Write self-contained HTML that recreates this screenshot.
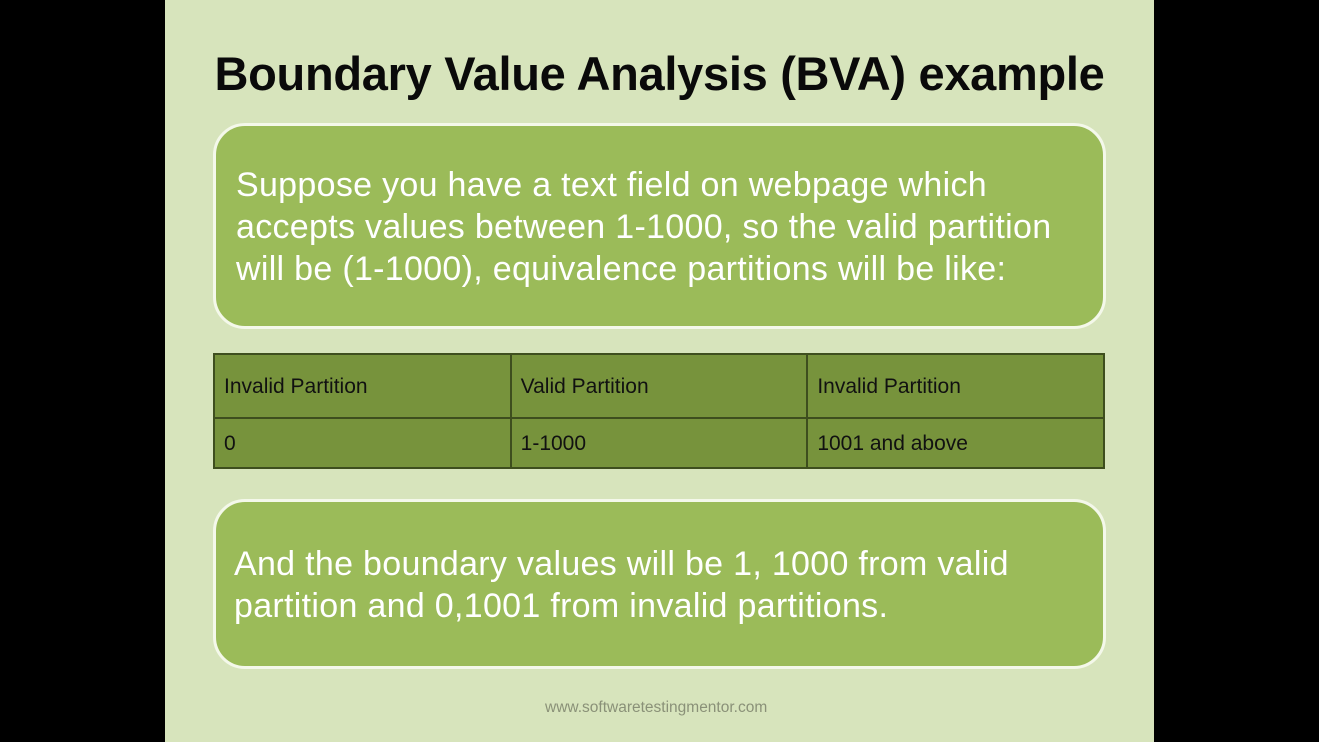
<!DOCTYPE html>
<html><head><style>
*{margin:0;padding:0;box-sizing:border-box}
body{width:1319px;height:742px;background:#000;position:relative;overflow:hidden;font-family:"Liberation Sans",sans-serif}
.slide{position:absolute;left:165px;top:0;width:989px;height:742px;background:#d7e4bc}
.title{position:absolute;left:0;width:989px;top:46px;text-align:center;font-weight:bold;font-size:47px;color:#0a0a0a;letter-spacing:-0.3px}
.box{position:absolute;background:#9bbb59;border:3px solid #f4f8ea;border-radius:32px;color:#fff;font-size:34px;line-height:42px;white-space:nowrap;letter-spacing:0.3px}
table{position:absolute;left:48px;top:353px;width:892px;border-collapse:collapse;background:#77933c;font-size:21px;color:#111}
td{border:2px solid #3e4e1e;padding:2px 9px 0;width:33.3%}
.foot{position:absolute;left:380px;top:699px;font-size:15.5px;color:#8a9178}
</style></head><body>
<div class="slide">
<div class="title">Boundary Value Analysis (BVA) example</div>
<div class="box" style="left:48px;top:123px;width:893px;height:206px;padding:38px 0 0 20px">Suppose you have a text field on webpage which<br>accepts values between 1-1000, so the valid partition<br>will be (1-1000), equivalence partitions will be like:</div>
<table>
<tr style="height:64px"><td>Invalid Partition</td><td>Valid Partition</td><td>Invalid Partition</td></tr>
<tr style="height:50px"><td>0</td><td>1-1000</td><td>1001 and above</td></tr>
</table>
<div class="box" style="left:48px;top:499px;width:893px;height:170px;padding:41px 0 0 18px">And the boundary values will be 1, 1000 from valid<br>partition and 0,1001 from invalid partitions.</div>
<div class="foot">www.softwaretestingmentor.com</div>
</div>
</body></html>
